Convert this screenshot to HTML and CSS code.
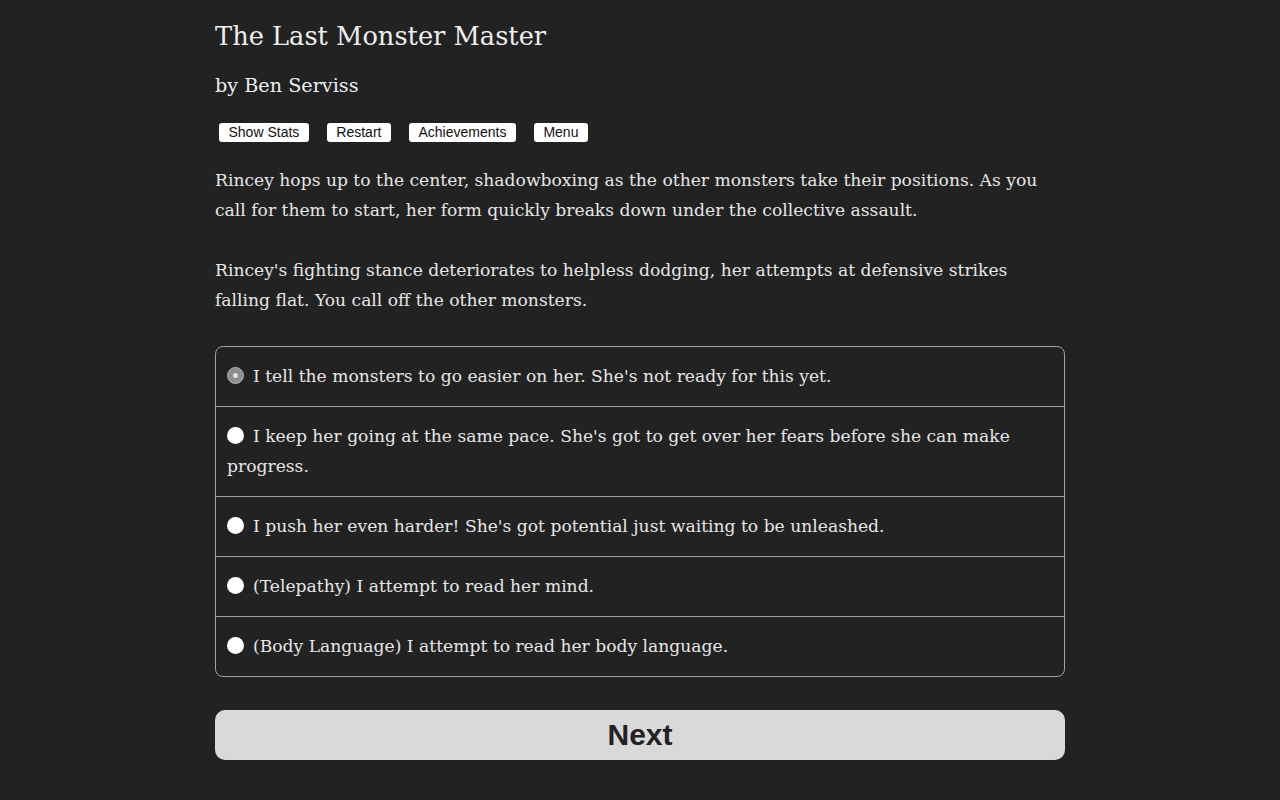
FILE: index.html
```html
<!DOCTYPE html>
<html>
<head>
<meta charset="utf-8">
<link rel="stylesheet" href="styles.css">
</head>
<body>
<div class="container">
  <h1 class="title">The Last Monster Master</h1>
  <h2 class="author">by Ben Serviss</h2>
  <div class="buttons">
    <button class="btn">Show Stats</button>
    <button class="btn">Restart</button>
    <button class="btn">Achievements</button>
    <button class="btn">Menu</button>
  </div>
  <p class="para">Rincey hops up to the center, shadowboxing as the other monsters take their positions. As you call for them to start, her form quickly breaks down under the collective assault.</p>
  <p class="para">Rincey's fighting stance deteriorates to helpless dodging, her attempts at defensive strikes falling flat. You call off the other monsters.</p>
  <div class="choices">
    <div class="choice"><span class="radio checked"></span>I tell the monsters to go easier on her. She's not ready for this yet.</div>
    <div class="choice"><span class="radio"></span>I keep her going at the same pace. She's got to get over her fears before she can make progress.</div>
    <div class="choice"><span class="radio"></span>I push her even harder! She's got potential just waiting to be unleashed.</div>
    <div class="choice"><span class="radio"></span>(Telepathy) I attempt to read her mind.</div>
    <div class="choice"><span class="radio"></span>(Body Language) I attempt to read her body language.</div>
  </div>
  <button class="next">Next</button>
</div>
</body>
</html>
```

FILE: styles.css
```css
html, body {
  margin: 0;
  padding: 0;
  background: #222222;
}
body {
  color: #e6e6e6;
  font-family: "DejaVu Serif", "Liberation Serif", serif;
}
.container {
  width: 850px;
  margin: 0 auto;
  padding-top: 16px;
}
.title {
  font-size: 25.7px;
  font-weight: normal;
  margin: 0;
  line-height: 40px;
  color: #eeeeee;
}
.author {
  font-size: 19.2px;
  font-weight: normal;
  margin: 15px 0 0;
  line-height: 30px;
  color: #eeeeee;
}
.buttons {
  display: flex;
  gap: 18px;
  margin: 22px 0 0 4px;
}
.btn {
  font-family: "Liberation Sans", Arial, sans-serif;
  font-size: 14px;
  background: #ffffff;
  color: #111;
  border: none;
  border-radius: 3px;
  height: 19px;
  padding: 0 9.5px;
  line-height: 19px;
}
.para {
  font-size: 17.15px;
  line-height: 30px;
  margin: 23px 0 0;
}
.para + .para {
  margin-top: 30px;
}
.choices {
  margin-top: 31px;
  border: 1px solid #a0a0a0;
  border-radius: 8px;
}
.choice {
  font-size: 17.15px;
  line-height: 30px;
  padding: 14px 11px 15px;
  border-top: 1px solid #a0a0a0;
}
.choice:first-child {
  border-top: none;
}
.radio {
  display: inline-block;
  width: 17px;
  height: 17px;
  border-radius: 50%;
  background: #ffffff;
  margin-right: 9px;
  vertical-align: -2px;
  box-sizing: border-box;
}
.radio.checked {
  background: #8e8e8e;
  border: 1px solid #b0b0b0;
  position: relative;
}
.radio.checked::after {
  content: "";
  position: absolute;
  left: 5px;
  top: 5px;
  width: 5px;
  height: 5px;
  border-radius: 50%;
  background: #e0e0e0;
}
.next {
  display: block;
  width: 850px;
  height: 50px;
  margin-top: 33px;
  background: #d9d9d9;
  border: none;
  border-radius: 10px;
  font-family: "Liberation Sans", Arial, sans-serif;
  font-weight: bold;
  font-size: 30px;
  color: #222222;
}
```
